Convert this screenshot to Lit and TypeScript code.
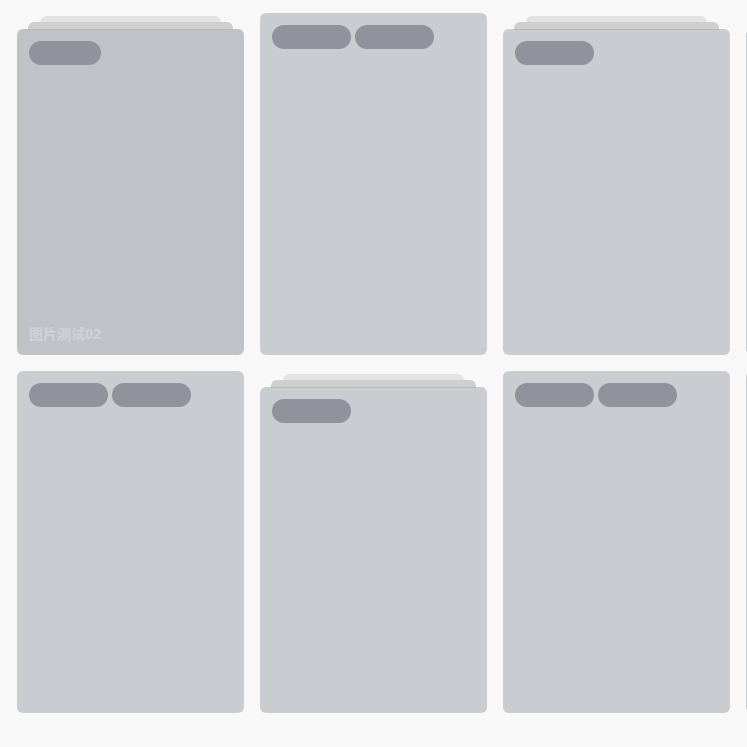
import { LitElement, html, css, nothing } from "lit";
import { customElement, property } from "lit/decorators.js";

type Tag = "short" | "long";

interface CardData {
  tags: Tag[];
  stacked?: boolean;
  title?: string;
}

const CARDS: CardData[] = [
  { tags: ["short"], stacked: true, title: "图片测试02" },
  { tags: ["long", "long"] },
  { tags: ["long", "long"] },
  { tags: ["long"], stacked: true },
  { tags: ["long"], stacked: true },
  { tags: ["long", "long"] },
  { tags: ["long"], stacked: true },
  { tags: ["long", "long"] },
];

@customElement("skeleton-card")
class SkeletonCard extends LitElement {
  @property({ attribute: false }) card: CardData = { tags: [] };

  static styles = css`
    :host {
      display: flex;
      flex-direction: column;
      min-width: 0;
    }
    .back,
    .middle {
      flex: none;
      border-radius: 6px 6px 0 0;
    }
    .back {
      height: 6px;
      margin: 3px 10% 0;
      background: #e3e3e3;
    }
    .middle {
      height: 7px;
      margin: 0 5%;
      background: #cfcfcf;
    }
    .edge {
      flex: none;
      z-index: 1;
      height: 1px;
      margin: 0 5% -1px;
      background: #b5b7b9;
    }
    .body {
      flex: 1;
      display: flex;
      flex-direction: column;
      justify-content: space-between;
      box-sizing: border-box;
      padding: 12px;
      border-radius: 6px;
      background: #c9ccd1;
    }
    .titled {
      background: #bfc3c8;
    }
    .tags {
      display: flex;
      gap: 4px;
    }
    .tag {
      height: 24px;
      border-radius: 12px;
      background: #90939b;
    }
    .short {
      width: 72px;
    }
    .long {
      width: 79px;
    }
    .title {
      margin: 0;
      font: bold 14px/18px "Noto Sans", "Noto Sans CJK SC", sans-serif;
      color: #d0d3d6;
    }
  `;

  render() {
    const { tags, stacked, title } = this.card;
    return html`
      ${stacked
        ? html`<div class="back"></div><div class="middle"></div><div class="edge"></div>`
        : nothing}
      <article class="body ${title ? "titled" : ""}">
        <div class="tags">${tags.map((t) => html`<span class="tag ${t}"></span>`)}</div>
        ${title ? html`<h2 class="title">${title}</h2>` : nothing}
      </article>
    `;
  }
}

@customElement("app-root")
class AppRoot extends LitElement {
  static styles = css`
    :host {
      display: block;
      box-sizing: border-box;
      min-height: 100vh;
      padding: 13px 0 0 17px;
      overflow: hidden;
      background: #f8f8f8;
    }
    .grid {
      display: grid;
      grid-auto-flow: column;
      grid-template-rows: auto auto;
      grid-auto-columns: calc((100% - 49px) / 3);
      gap: 16px;
    }
    .cell {
      aspect-ratio: 227 / 342;
    }
  `;

  render() {
    return html`
      <main class="grid">
        ${CARDS.map((card) => html`<skeleton-card class="cell" .card=${card}></skeleton-card>`)}
      </main>
    `;
  }
}
